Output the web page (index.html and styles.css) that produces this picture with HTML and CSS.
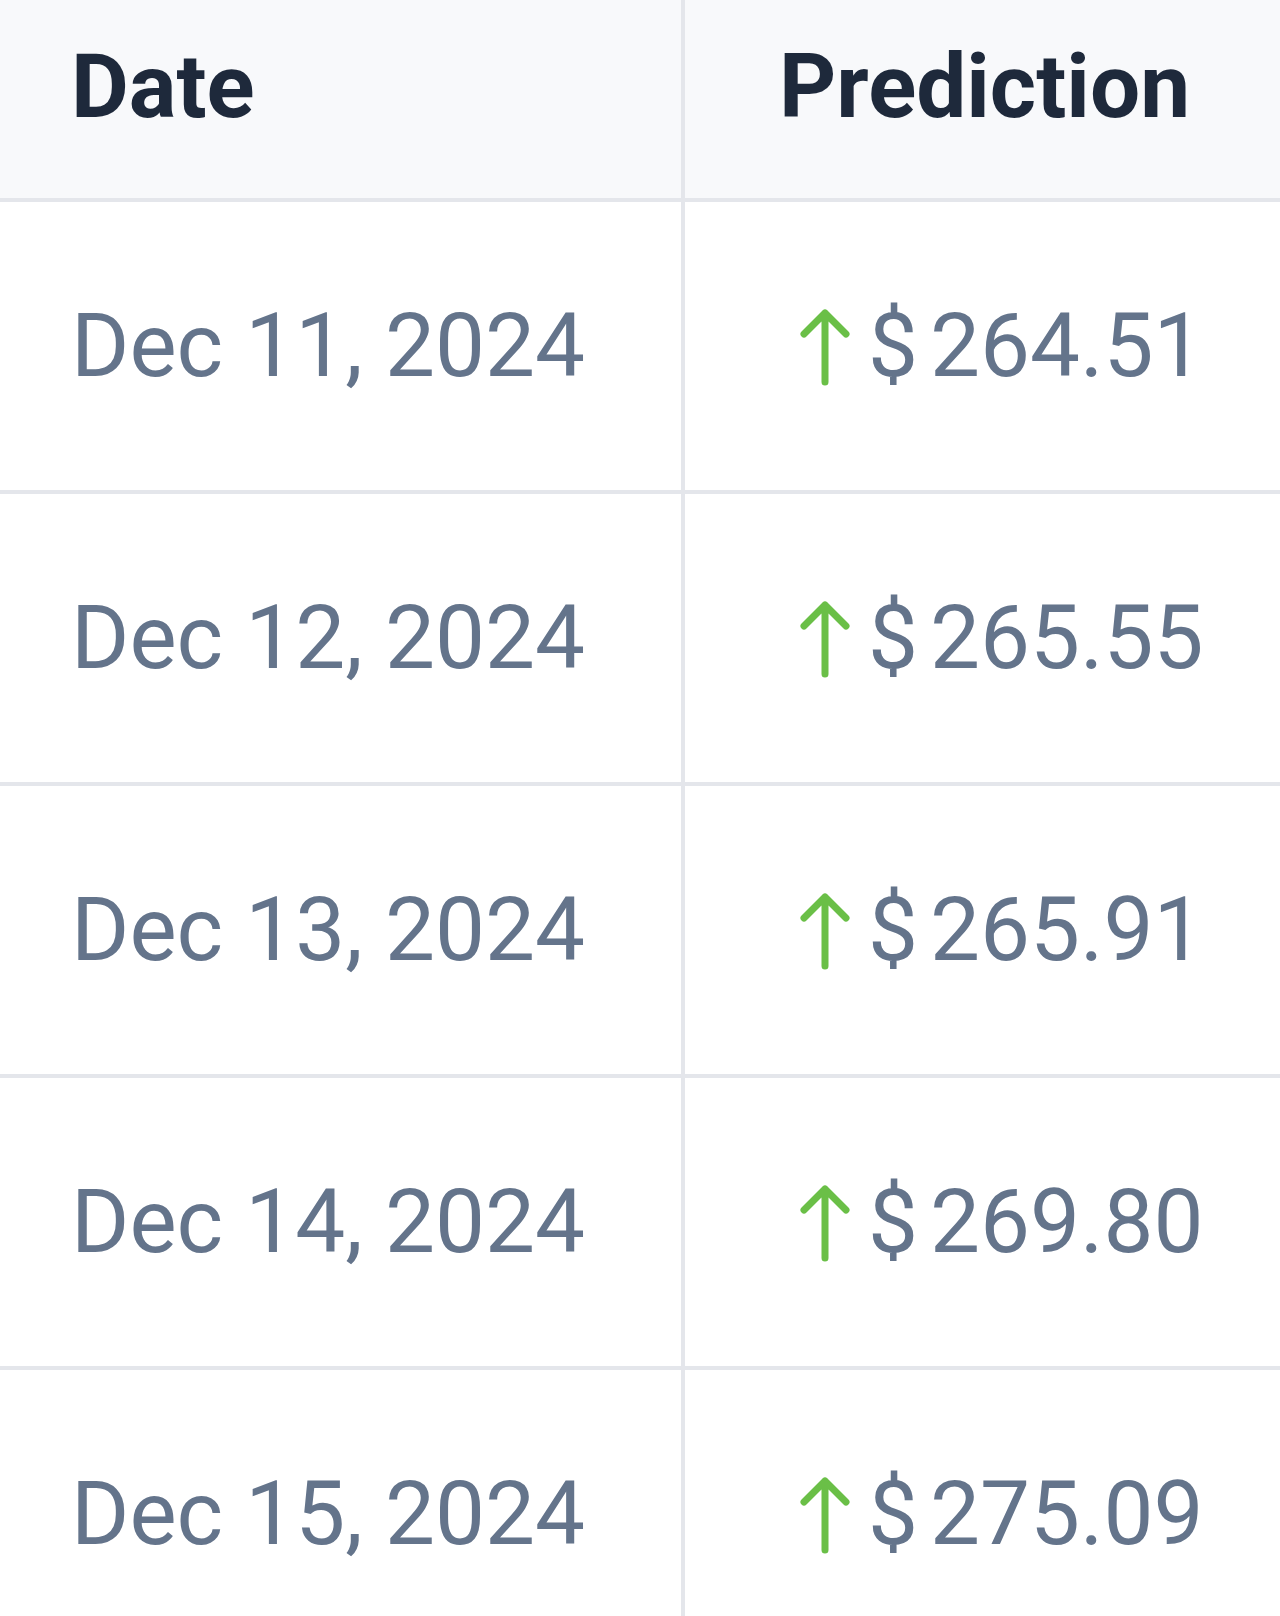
FILE: index.html
```html
<!DOCTYPE html>
<html lang="en">
<head>
<meta charset="utf-8">
<title>Predictions</title>
<link rel="stylesheet" href="styles.css">
</head>
<body>
<div class="table" role="table">
  <div class="cell head date-col" role="columnheader">Date</div>
  <div class="cell head price-col" role="columnheader">Prediction</div>

  <div class="cell date-col" role="cell">Dec 11, 2024</div>
  <div class="cell price-col" role="cell">
    <span class="price">
      <svg class="arrow" viewBox="0 0 50 78" aria-hidden="true"><path d="M25 5V74M4 26L25 5L46 26"/></svg>
      <span class="cur">$</span><span class="amt">264.51</span>
    </span>
  </div>

  <div class="cell date-col" role="cell">Dec 12, 2024</div>
  <div class="cell price-col" role="cell">
    <span class="price">
      <svg class="arrow" viewBox="0 0 50 78" aria-hidden="true"><path d="M25 5V74M4 26L25 5L46 26"/></svg>
      <span class="cur">$</span><span class="amt">265.55</span>
    </span>
  </div>

  <div class="cell date-col" role="cell">Dec 13, 2024</div>
  <div class="cell price-col" role="cell">
    <span class="price">
      <svg class="arrow" viewBox="0 0 50 78" aria-hidden="true"><path d="M25 5V74M4 26L25 5L46 26"/></svg>
      <span class="cur">$</span><span class="amt">265.91</span>
    </span>
  </div>

  <div class="cell date-col" role="cell">Dec 14, 2024</div>
  <div class="cell price-col" role="cell">
    <span class="price">
      <svg class="arrow" viewBox="0 0 50 78" aria-hidden="true"><path d="M25 5V74M4 26L25 5L46 26"/></svg>
      <span class="cur">$</span><span class="amt">269.80</span>
    </span>
  </div>

  <div class="cell date-col" role="cell">Dec 15, 2024</div>
  <div class="cell price-col" role="cell">
    <span class="price">
      <svg class="arrow" viewBox="0 0 50 78" aria-hidden="true"><path d="M25 5V74M4 26L25 5L46 26"/></svg>
      <span class="cur">$</span><span class="amt">275.09</span>
    </span>
  </div>
</div>
</body>
</html>
```

FILE: styles.css
```css
* { box-sizing: border-box; }

html, body {
  margin: 0;
  padding: 0;
  background: #ffffff;
}

body {
  font-family: Roboto, "Liberation Sans", Arial, sans-serif;
  font-size: 89px;
  line-height: 89px;
  color: #64748b;
  height: 1616px;
  overflow: hidden;
}

.table {
  display: grid;
  grid-template-columns: 685px 1fr;
  width: 1280px;
}

.cell {
  display: flex;
  align-items: center;
  height: 292px;
  border-bottom: 4px solid #e4e6eb;
  padding-bottom: 2px;
  white-space: nowrap;
}

.head {
  height: 202px;
  background: #f8f9fb;
  color: #1e293b;
  font-weight: 700;
  padding-bottom: 26px;
}

.date-col {
  border-right: 4px solid #e4e6eb;
  padding-left: 71px;
}

.price-col {
  padding-left: 94px;
}

.price {
  display: flex;
  align-items: center;
  margin-left: 21px;
}

.arrow {
  width: 50px;
  height: 78px;
  fill: none;
  stroke: #6abf47;
  stroke-width: 7;
  stroke-linecap: round;
  stroke-linejoin: round;
  margin-top: 4px;
  margin-right: 18px;
}

.cur {
  margin-right: 12px;
}
```
